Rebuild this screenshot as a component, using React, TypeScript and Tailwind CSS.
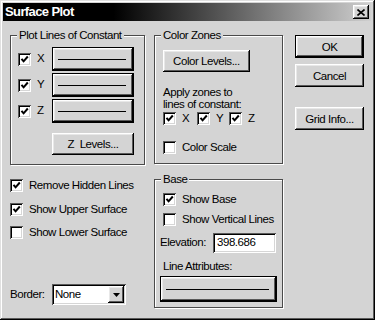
import React from "react";
import clsx from "clsx";

const raised =
  "shadow-[inset_-1px_-1px_#000,inset_1px_1px_#fff,inset_-2px_-2px_#5a5a5a,inset_2px_2px_#e8e8e8]";
const sunken =
  "shadow-[inset_1px_1px_#5a5a5a,inset_-1px_-1px_#fff,inset_2px_2px_#000,inset_-2px_-2px_#d6d6d6]";

function Check({ checked }: { checked?: boolean }) {
  return (
    <span
      className={clsx(
        "flex h-[13px] w-[13px] shrink-0 items-center justify-center bg-white",
        sunken
      )}
    >
      {checked && (
        <svg width="9" height="9" viewBox="0 0 9 9">
          <path d="M1.5 3.8 L3.6 6.3 L7.8 1.5" stroke="#000" strokeWidth="2" fill="none" />
        </svg>
      )}
    </span>
  );
}

function CheckRow({
  checked,
  label,
  className,
}: {
  checked?: boolean;
  label: string;
  className?: string;
}) {
  return (
    <div className={clsx("flex h-[13px] items-center gap-[6px]", className)}>
      <Check checked={checked} />
      <span className="leading-[13px]">{label}</span>
    </div>
  );
}

function Btn({
  children,
  framed,
  className,
}: {
  children?: React.ReactNode;
  framed?: boolean;
  className?: string;
}) {
  return (
    <button
      className={clsx(
        "flex items-center justify-center bg-[#d4d4d4] leading-[12px]",
        framed && "border border-black",
        raised,
        className
      )}
    >
      {children}
    </button>
  );
}

function LineBtn({ className }: { className?: string }) {
  return (
    <Btn framed className={clsx("px-[5px] pr-[7px]", className)}>
      <span className="block h-px w-full bg-black" />
    </Btn>
  );
}

function Group({
  title,
  className,
  children,
}: {
  title: string;
  className?: string;
  children?: React.ReactNode;
}) {
  return (
    <div
      className={clsx(
        "relative border border-[#4a4a4a] shadow-[inset_1px_1px_#fff,1px_1px_#fff]",
        className
      )}
    >
      <span className="absolute left-[6px] top-[-7px] bg-[#d4d4d4] px-[2px] leading-[12px]">
        {title}
      </span>
      {children}
    </div>
  );
}

export default function App() {
  return (
    <div className="h-[320px] w-[375px] bg-[#d4d4d4] p-[3px] font-['Liberation_Sans',Arial,sans-serif] text-[11.5px] tracking-[-0.45px] text-black shadow-[inset_-1px_-1px_#000,inset_1px_1px_#e0e0e0,inset_-2px_-2px_#5a5a5a,inset_2px_2px_#fff]">
      {/* Title bar */}
      <div className="flex h-[18px] w-[368px] items-center justify-between bg-[linear-gradient(to_right,#000_0%,#000_30%,#cfcfcf_100%)] pl-[2px] pr-[2px]">
        <span className="text-[13px] font-bold tracking-[-0.6px] text-white">Surface Plot</span>
        <button
          className={clsx(
            "flex h-[14px] w-[16px] items-center justify-center bg-[#d4d4d4]",
            raised
          )}
        >
          <svg width="8" height="7" viewBox="0 0 8 7">
            <path d="M0.5 0.5 L7.5 6.5 M7.5 0.5 L0.5 6.5" stroke="#000" strokeWidth="1.6" />
          </svg>
        </button>
      </div>

      {/* Body */}
      <div className="flex pl-[7px] pt-[14px]">
        {/* Left column */}
        <div className="flex w-[135px] flex-col">
          <Group title="Plot Lines of Constant" className="h-[130px] w-[135px] pl-[7px] pt-[11px]">
            <div className="flex flex-col gap-[2px]">
              {["X", "Y", "Z"].map((a) => (
                <div key={a} className="flex h-[24px] items-center">
                  <div className="flex w-[34px] items-center gap-[6px]">
                    <Check checked />
                    <span>{a}</span>
                  </div>
                  <LineBtn className="h-[24px] w-[82px]" />
                </div>
              ))}
            </div>
            <Btn className="ml-[34px] mt-[10px] h-[22px] w-[82px]">Z&nbsp; Levels...</Btn>
          </Group>

          <div className="mt-[14px] flex flex-col gap-[10.5px]">
            <CheckRow checked label="Remove Hidden Lines" />
            <CheckRow checked label="Show Upper Surface" />
            <CheckRow label="Show Lower Surface" />
          </div>

          <div className="mt-[45px] flex items-center">
            <span className="w-[42px]">Border:</span>
            <div className={clsx("flex h-[21px] w-[74px] items-center bg-white p-[2px]", sunken)}>
              <span className="flex-1 pl-[1px]">None</span>
              <span
                className={clsx(
                  "flex h-[17px] w-[16px] items-center justify-center bg-[#d4d4d4]",
                  raised
                )}
              >
                <svg width="7" height="4" viewBox="0 0 7 4">
                  <path d="M0 0 H7 L3.5 4 Z" fill="#000" />
                </svg>
              </span>
            </div>
          </div>
        </div>

        {/* Middle column */}
        <div className="ml-[9px] flex w-[129px] flex-col">
          <Group title="Color Zones" className="h-[129px] pl-[8px] pt-[14px]">
            <Btn className="h-[22px] w-[87px]">Color Levels...</Btn>
            <p className="mt-[14px] leading-[12px]">
              Apply zones to
              <br />
              lines of constant:
            </p>
            <div className="mt-[2px] flex">
              <CheckRow checked label="X" className="w-[34px]" />
              <CheckRow checked label="Y" className="w-[32px]" />
              <CheckRow checked label="Z" />
            </div>
            <CheckRow label="Color Scale" className="mt-[16px]" />
          </Group>

          <Group title="Base" className="mt-[15px] h-[129px] pl-[5px] pr-[5px] pt-[13px]">
            <div className="flex flex-col gap-[7px] pl-[3px]">
              <CheckRow checked label="Show Base" />
              <CheckRow label="Show Vertical Lines" />
            </div>
            <div className="mt-[7px] flex items-center">
              <span className="w-[53px]">Elevation:</span>
              <div className={clsx("flex h-[20px] w-[63px] items-center bg-white pl-[4px]", sunken)}>
                398.686
              </div>
            </div>
            <p className="mt-[7px] pl-[3px] leading-[12px]">Line Attributes:</p>
            <LineBtn className="mt-[4px] h-[26px] w-[117px]" />
          </Group>
        </div>

        {/* Right column */}
        <div className="ml-[12px] flex w-[69px] flex-col">
          <Btn framed className="h-[23px] w-[69px]">OK</Btn>
          <Btn className="mt-[6px] h-[23px] w-[69px]">Cancel</Btn>
          <Btn className="mt-[20px] h-[23px] w-[69px]">Grid Info...</Btn>
        </div>
      </div>
    </div>
  );
}
